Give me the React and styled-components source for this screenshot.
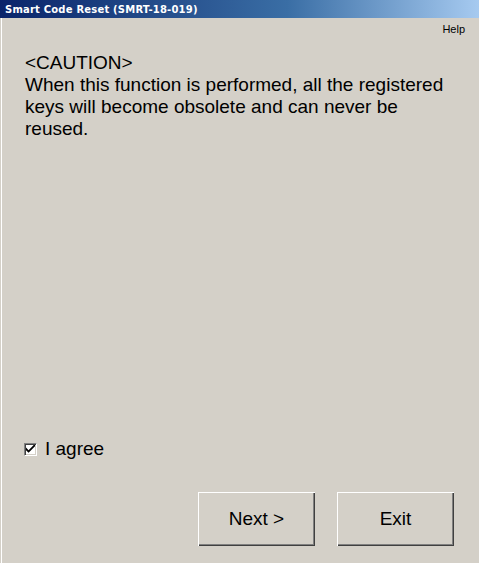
import React, { useState } from 'react'
import styled, { createGlobalStyle } from 'styled-components'

const Global = createGlobalStyle`
    html, body {
        margin: 0;
        padding: 0;
        background: #d4d0c8;
    }
`

const Window = styled.div`
    display: flex;
    flex-direction: column;
    width: 479px;
    height: 563px;
    background: #d4d0c8;
    font-family: "Liberation Sans", Arial, sans-serif;
    color: #000;
    overflow: hidden;
`

const TitleBar = styled.div`
    height: 18px;
    display: flex;
    align-items: center;
    padding-left: 5px;
    background: linear-gradient(to right, #0a246a 0%, #3a6ea5 60%, #a6caf0 100%);
    color: #fff;
    font-family: "DejaVu Sans", Tahoma, sans-serif;
    font-weight: bold;
    font-size: 10px;
    letter-spacing: 0.2px;
    white-space: nowrap;
`

const Body = styled.div`
    flex: 1;
    display: flex;
    flex-direction: column;
    margin-left: 1px;
    border-left: 1px solid #ffffff;
`

const MenuRow = styled.div`
    display: flex;
    justify-content: flex-end;
    height: 21px;
    align-items: center;
    padding-right: 14px;
    font-size: 11px;
`

const Message = styled.div`
    width: 422px;
    padding: 13px 0 0 23px;
    font-size: 19px;
    line-height: 22px;
`

const Spacer = styled.div`
    flex: 1;
`

const AgreeRow = styled.label`
    display: flex;
    align-items: center;
    gap: 8px;
    padding-left: 22px;
    font-size: 19px;
    margin-bottom: 32px;
    cursor: default;
`

const Box = styled.span`
    width: 11px;
    height: 11px;
    display: flex;
    align-items: center;
    justify-content: center;
    background: #fff;
    border-top: 1px solid #808080;
    border-left: 1px solid #808080;
    border-right: 1px solid #fff;
    border-bottom: 1px solid #fff;
    box-shadow: inset 1px 1px 0 #404040, inset -1px -1px 0 #d4d0c8;
`

const Buttons = styled.div`
    display: flex;
    justify-content: flex-end;
    gap: 22px;
    padding-right: 25px;
    margin-bottom: 17px;
`

const Button = styled.button`
    width: 117px;
    height: 54px;
    background: #d4d0c8;
    font-family: "Liberation Sans", Arial, sans-serif;
    font-size: 19px;
    color: #000;
    border: none;
    border-radius: 0;
    padding: 0;
    box-shadow: inset 1px 1px 0 #ffffff, inset -1px -1px 0 #404040, inset -2px -2px 0 #808080;
`

const Check = () => (
    <svg width="9" height="9" viewBox="0 0 7 7">
        <path d="M0 2 L0 4 L2 6 L7 1 L7 -1 L2 4 Z" fill="#000" />
    </svg>
)

const App = () => {
    const [agree, setAgree] = useState(true)
    return (
        <>
            <Global />
            <Window>
                <TitleBar>Smart Code Reset (SMRT-18-019)</TitleBar>
                <Body>
                    <MenuRow>Help</MenuRow>
                    <Message>
                        &lt;CAUTION&gt;
                        <br />
                        When this function is performed, all the registered keys will become obsolete and can never be
                        reused.
                    </Message>
                    <Spacer />
                    <AgreeRow onClick={() => setAgree(!agree)}>
                        <Box>{agree && <Check />}</Box>
                        I agree
                    </AgreeRow>
                    <Buttons>
                        <Button>Next &gt;</Button>
                        <Button>Exit</Button>
                    </Buttons>
                </Body>
            </Window>
        </>
    )
}

export default App
